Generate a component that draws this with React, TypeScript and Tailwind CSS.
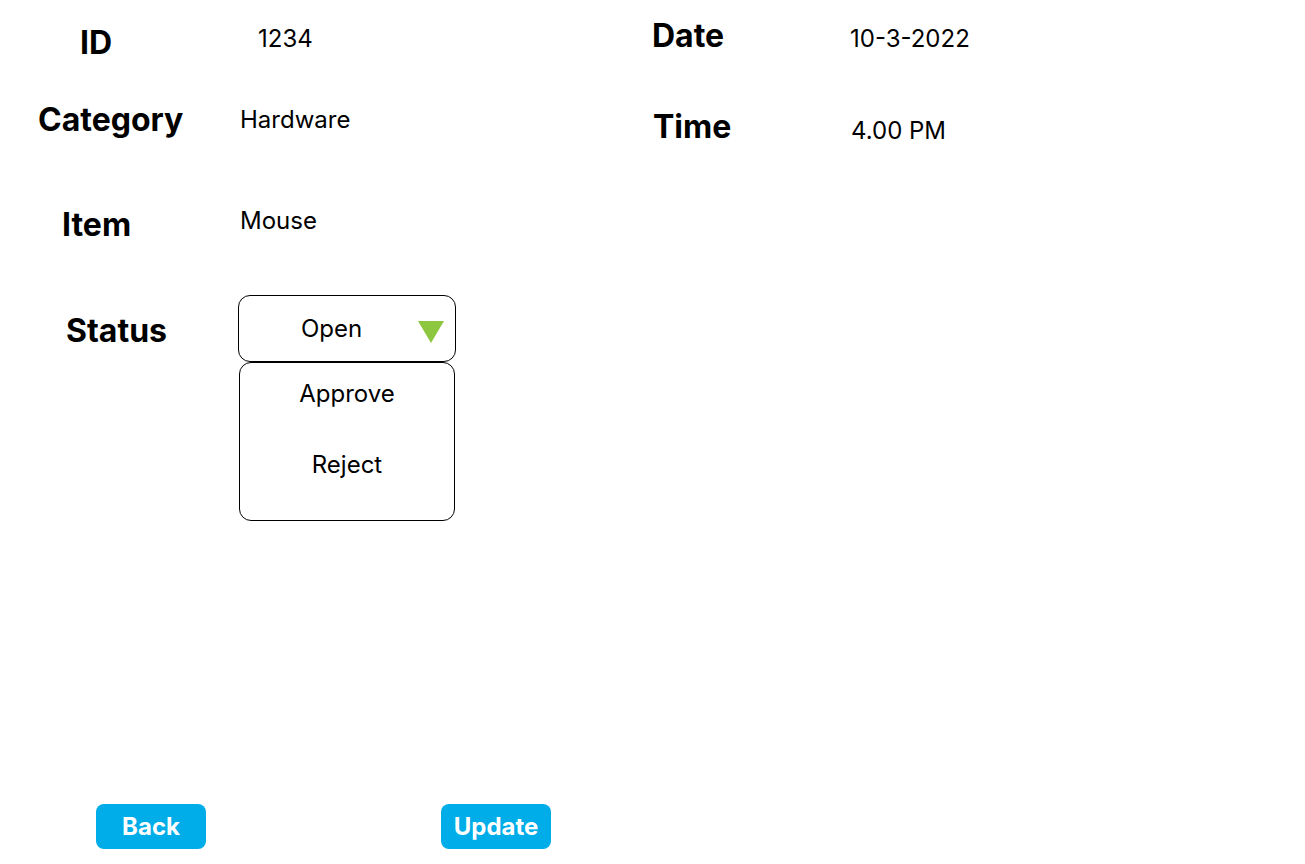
import React from "react";

const Label = ({ children, className }: { children: React.ReactNode; className?: string }) => (
  <div className={"text-[32px] leading-[38px] font-bold text-black " + (className ?? "")}>{children}</div>
);

const Value = ({ children, className }: { children: React.ReactNode; className?: string }) => (
  <div className={"text-[24px] leading-[30px] text-black " + (className ?? "")}>{children}</div>
);

const StatusSelect = () => (
  <div className="flex flex-col">
    <div className="relative w-[218px] h-[67px] border border-black rounded-[12px] flex items-center pl-[62px]">
      <span className="text-[24px] leading-[30px]">Open</span>
      <svg className="absolute left-[179px] top-[25px]" width="26" height="22" viewBox="0 0 26 22">
        <polygon points="0,0 26,0 13,22" fill="#8dc63f" />
      </svg>
    </div>
    <div className="ml-[1px] w-[216px] h-[159px] border border-black rounded-[12px] flex flex-col items-center">
      <span className="mt-[16px] text-[24px] leading-[30px]">Approve</span>
      <span className="mt-[41px] text-[24px] leading-[30px]">Reject</span>
    </div>
  </div>
);

export default function App() {
  return (
    <div
      className="min-h-[864px] w-full bg-white flex flex-col"
      style={{ fontFamily: "Inter, 'Noto Sans', sans-serif" }}
    >
      <div className="flex">
        {/* left column */}
        <div className="w-[652px] flex flex-col">
          <div className="flex mt-[24px]">
            <Label className="w-[240px] pl-[80px]">ID</Label>
            <Value className="pl-[18px]">1234</Value>
          </div>
          <div className="flex mt-[39px]">
            <Label className="w-[240px] pl-[38px]">Category</Label>
            <Value className="mt-[4px]">Hardware</Value>
          </div>
          <div className="flex mt-[67px]">
            <Label className="w-[238px] pl-[62px]">Item</Label>
            <Value className="pl-[2px]">Mouse</Value>
          </div>
          <div className="flex mt-[51px]">
            <Label className="w-[238px] pl-[66px] mt-[17px]">Status</Label>
            <StatusSelect />
          </div>
        </div>

        {/* right column */}
        <div className="flex flex-col">
          <div className="flex mt-[17px]">
            <Label className="w-[198px]">Date</Label>
            <Value className="mt-[7px]">10-3-2022</Value>
          </div>
          <div className="flex mt-[53px]">
            <Label className="w-[199px] pl-[1px]">Time</Label>
            <Value className="mt-[8px]">4.00 PM</Value>
          </div>
        </div>
      </div>

      <div className="mt-auto pb-[15px] flex pl-[96px] gap-[235px]">
        <button className="w-[110px] h-[45px] rounded-[8px] bg-[#00ade8] text-white font-bold text-[24px] leading-[30px]">
          Back
        </button>
        <button className="w-[110px] h-[45px] rounded-[8px] bg-[#00ade8] text-white font-bold text-[24px] leading-[30px]">
          Update
        </button>
      </div>
    </div>
  );
}
